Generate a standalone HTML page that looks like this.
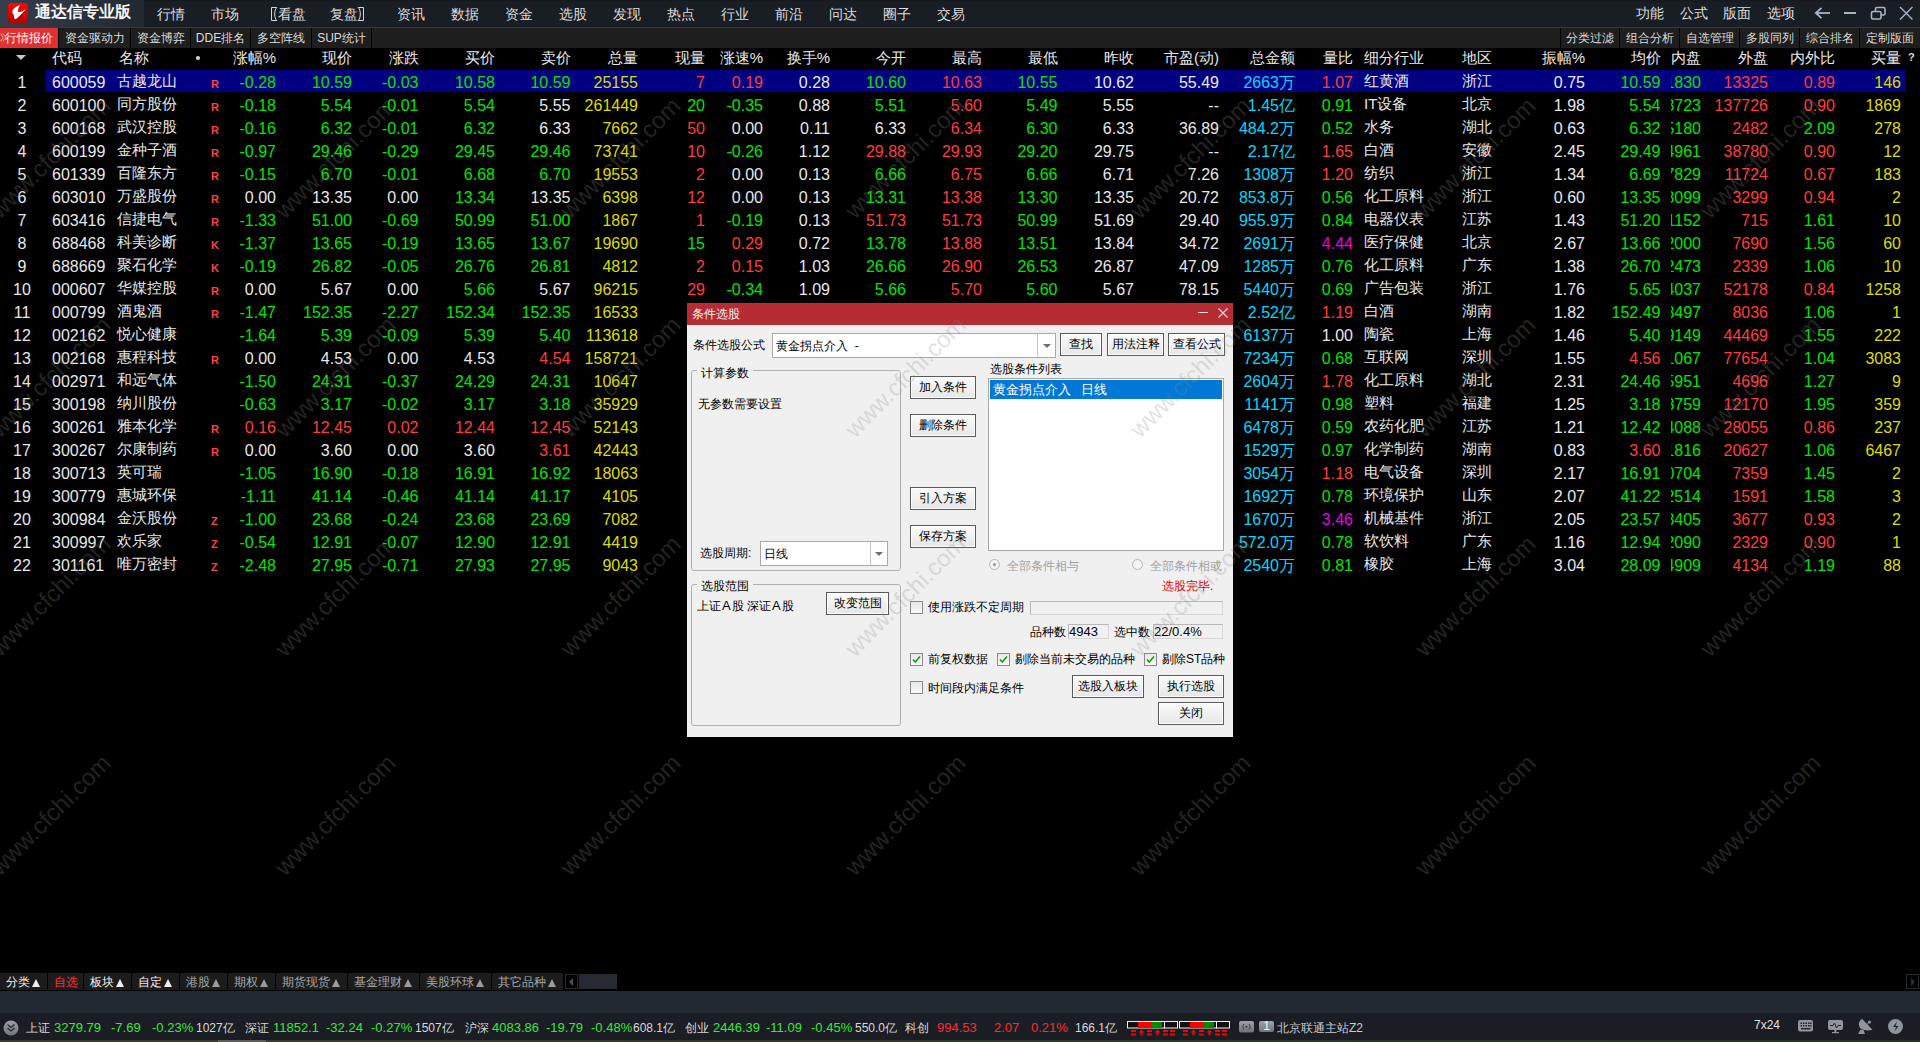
<!DOCTYPE html>
<html><head><meta charset="utf-8">
<style>
*{margin:0;padding:0;box-sizing:border-box}
html,body{width:1920px;height:1042px;overflow:hidden;background:#000}
body{position:relative;font-family:"Liberation Sans",sans-serif;color:#e8e8e8}
.t,.h,.n,.mk{position:absolute;white-space:nowrap;line-height:23px;height:23px}
.t{margin-top:1px}
.t{font-size:16px}
.n{font-size:15px;margin-top:-1px}
.h{font-size:15px;line-height:20px;height:20px}
.c{width:80px;text-align:center}
.mk{font-size:11px;font-weight:bold;color:#ff4040;line-height:29px}
.hl{position:absolute;left:45px;top:70px;width:1861px;height:22px;background:#000080}
.clip{position:absolute;left:1671px;width:30px;height:23px;overflow:hidden}
.tri{position:absolute;left:16px;top:55px;width:0;height:0;border-left:5px solid transparent;border-right:5px solid transparent;border-top:5px solid #c8c8c8}
.dot{position:absolute;left:196px;top:56px;width:4px;height:4px;border-radius:50%;background:#d8d8d8}
.q{position:absolute;left:1908px;top:51px;font-size:11px;font-weight:bold;color:#d8d8d8}
#title{position:absolute;left:0;top:0;width:1920px;height:27px;background:linear-gradient(#15181c,#191d24 2px)}
#title .lg{position:absolute;left:0;top:0;width:144px;height:27px;background:linear-gradient(to right,#363e4b,#222730)}
#title .m{position:absolute;top:1px;font-size:14px;line-height:27px;color:#dcdcdc;white-space:nowrap}
#tline{position:absolute;left:0;top:27px;width:1920px;height:1px;background:#353a42}
#tabs{position:absolute;left:0;top:28px;width:1920px;height:20px;background:#1e1e1e}
.tb{position:absolute;top:0;height:20px;font-size:12px;line-height:20px;color:#dcdcdc;text-align:center;border-right:1px solid #000;white-space:nowrap}

#dlg{position:absolute;left:687px;top:303px;width:546px;height:434px;background:#f0f0f0;color:#000}
#dlg .dt{position:absolute;left:0;top:0;width:546px;height:22px;background:#b52d33}
#dlg .dtt{position:absolute;left:5px;top:3px;font-size:12px;line-height:16px;color:#f6f6f6}
#dlg .dmin{position:absolute;left:511px;top:9px;width:10px;height:1px;background:#f4dcdc}
#dlg .dl{position:absolute;font-size:12px;line-height:16px;white-space:nowrap;color:#000}
#dlg .gr{color:#a0a0a0}
#dlg .glb{background:#f0f0f0;padding:0 4px}
#dlg .cb{position:absolute;background:#fff;border:1px solid #a8a8a8}
#dlg .cbd{position:absolute;top:0;width:1px;height:23px;background:#c8c8c8}
#dlg .cba{position:absolute;width:0;height:0;border-left:4px solid transparent;border-right:4px solid transparent;border-top:4px solid #707070}
#dlg .btn{position:absolute;height:23px;border:1px solid #5a5a5a;background:linear-gradient(#fbfbfb,#e6e6e6);box-shadow:inset 0 0 0 1px #fff;font-size:12px;line-height:21px;text-align:center;white-space:nowrap}
#dlg .lb{position:absolute;background:#fff;border:1px solid #a8a8a8}
#dlg .sel{position:absolute;left:1px;top:1px;width:232px;height:19px;background:#0078d7;color:#fff;font-size:13px;line-height:19px;padding-left:3px;white-space:nowrap}
#dlg .la{font-size:13px;margin:0 1px}
#dlg .grp{position:absolute;border:1px solid #b0b0b0;border-radius:3px}
#dlg .ck{position:absolute;width:13px;height:13px;border:1px solid #8a8a8a;background:linear-gradient(#e8e8e8,#f8f8f8)}
#dlg .ck svg{position:absolute;left:0;top:0}
#dlg .rd{position:absolute;width:11px;height:11px;border:1px solid #b8b8b8;border-radius:50%;background:#f4f4f4}
#dlg .rd.on:after{content:"";position:absolute;left:3px;top:3px;width:3px;height:3px;border-radius:50%;background:#909090}
#dlg .pb{position:absolute;border:1px solid #d8d8d8;border-top-color:#b8b8b8;border-left-color:#b8b8b8;background:#f0f0f0}

#btabs{position:absolute;left:0;top:973px;width:1920px;height:17px}
.bt{position:absolute;top:0;height:17px;background:#1c1c1c;font-size:12px;line-height:18px;color:#a8a8a8;padding-left:6px;white-space:nowrap}
.tu{display:inline-block;width:0;height:0;border-left:4.5px solid transparent;border-right:4.5px solid transparent;border-bottom:8px solid #9a9a9a;margin-left:2px;vertical-align:-1px}
.tu.w{border-bottom-color:#f0f0f0}
.sbtn{position:absolute;top:1px;width:13px;height:15px;border:1px solid #262a31;background:#000}
.tl{position:absolute;left:3px;top:3px;width:0;height:0;border-top:4px solid transparent;border-bottom:4px solid transparent;border-right:4px solid #4a4e56}
.tr{position:absolute;left:4px;top:3px;width:0;height:0;border-top:4px solid transparent;border-bottom:4px solid transparent;border-left:4px solid #2c3038}
.sthumb{position:absolute;left:579px;top:1px;width:38px;height:15px;background:#252a33}
#gap{position:absolute;left:0;top:991px;width:1920px;height:22px;background:#232930}
#status{position:absolute;left:0;top:1013px;width:1920px;height:27px;background:#1a1e24}
#olive{position:absolute;left:0;top:1040px;width:1920px;height:2px;background:linear-gradient(to right,#3a3c2a,#30382a 50%,#22341f)}
.s{position:absolute;top:7px;font-size:12px;line-height:16px;color:#d8d8d8;white-space:nowrap}
.s.g{color:#3ce63c;font-size:13px}
.s.rr{color:#ff2a2a;font-size:13px}
.ib{position:absolute;top:8px;width:15px;height:11px;border-radius:2px;background:linear-gradient(#9ca2ab,#70757e);text-align:center;line-height:11px;font-size:10px}

.wm{position:absolute;font-size:24px;line-height:23px;white-space:nowrap;color:rgba(140,140,140,0.27);transform:rotate(-45deg);transform-origin:0 100%;pointer-events:none}
</style></head><body>
<div id="title">
 <div class="lg"></div>
 <svg style="position:absolute;left:8px;top:3px" width="20" height="20" viewBox="0 0 20 20"><defs><linearGradient id="lgr" x1="0" y1="0" x2="0" y2="1"><stop offset="0" stop-color="#ff0606"/><stop offset="1" stop-color="#ae0000"/></linearGradient></defs><rect x="0" y="0" width="20" height="20" rx="3" fill="url(#lgr)"/><path d="M12 2 C8 3.5 4.6 6 4.2 8.5 C4 10 5.5 11.5 6 12.5 C6 14 6 16 7.5 16 C9.5 16 15 9 18 6.3 C15 8 12.5 9.5 10.5 9 C9.5 8.5 10 5 12 2 Z" fill="#fff"/></svg>
 <div class="m" style="left:35px;top:-2px;font-size:16px;font-weight:bold;color:#f4f4f4">通达信专业版</div>
 <div class="m" style="left:157px">行情</div>
 <div class="m" style="left:211px">市场</div>
 <svg style="position:absolute;left:270px;top:6px" width="8" height="16" viewBox="0 0 8 16"><path d="M6.8 1.5H1.5V14.5H6.8M6.8 1.5C4 4 4 12 6.8 14.5" fill="none" stroke="#d8d8d8" stroke-width="1"/></svg><div class="m" style="left:278px">看盘</div>
 <div class="m" style="left:330px">复盘</div><svg style="position:absolute;left:357px;top:6px" width="8" height="16" viewBox="0 0 8 16"><path d="M1.2 1.5H6.5V14.5H1.2M1.2 1.5C4 4 4 12 1.2 14.5" fill="none" stroke="#d8d8d8" stroke-width="1"/></svg>
 <div class="m" style="left:397px">资讯</div>
 <div class="m" style="left:451px">数据</div>
 <div class="m" style="left:505px">资金</div>
 <div class="m" style="left:559px">选股</div>
 <div class="m" style="left:613px">发现</div>
 <div class="m" style="left:667px">热点</div>
 <div class="m" style="left:721px">行业</div>
 <div class="m" style="left:775px">前沿</div>
 <div class="m" style="left:829px">问达</div>
 <div class="m" style="left:883px">圈子</div>
 <div class="m" style="left:937px">交易</div>
 <div class="m" style="left:1636px;top:0">功能</div>
 <div class="m" style="left:1680px;top:0">公式</div>
 <div class="m" style="left:1723px;top:0">版面</div>
 <div class="m" style="left:1767px;top:0">选项</div>
</div>
<div id="tline"></div>
<div id="tabs">
 <div class="tb" style="left:0;width:59px;background:#e03030;color:#fff">行情报价</div><svg style="position:absolute;left:0;top:5px" width="7" height="9" viewBox="0 0 7 9"><path d="M0.3 0.5L3.3 4.5L0.3 8.5M2.8 0.5L5.8 4.5L2.8 8.5" fill="none" stroke="#f0b4b4" stroke-width="0.9"/></svg>
 <div class="tb" style="left:59px;width:72px">资金驱动力</div>
 <div class="tb" style="left:131px;width:60px">资金博弈</div>
 <div class="tb" style="left:191px;width:60px">DDE排名</div>
 <div class="tb" style="left:251px;width:61px">多空阵线</div>
 <div class="tb" style="left:312px;width:60px">SUP统计</div>
 <div class="tb" style="left:1560px;width:60px;border-left:1px solid #000">分类过滤</div>
 <div class="tb" style="left:1620px;width:60px">组合分析</div>
 <div class="tb" style="left:1680px;width:60px">自选管理</div>
 <div class="tb" style="left:1740px;width:60px">多股同列</div>
 <div class="tb" style="left:1800px;width:60px">综合排名</div>
 <div class="tb" style="left:1860px;width:60px;border-right:0">定制版面</div>
</div>
<div class="tri"></div>
<div class="h" style="left:52px;top:48px;color:#e8e8e8">代码</div>
<div class="h" style="left:119px;top:48px;color:#e8e8e8">名称</div>
<div class="dot"></div>
<div class="h r" style="right:1644px;top:48px;color:#e8e8e8">涨幅%</div>
<div class="h r" style="right:1568px;top:48px;color:#e8e8e8">现价</div>
<div class="h r" style="right:1501.5px;top:48px;color:#e8e8e8">涨跌</div>
<div class="h r" style="right:1425px;top:48px;color:#e8e8e8">买价</div>
<div class="h r" style="right:1349.5px;top:48px;color:#e8e8e8">卖价</div>
<div class="h r" style="right:1282px;top:48px;color:#e8e8e8">总量</div>
<div class="h r" style="right:1215px;top:48px;color:#e8e8e8">现量</div>
<div class="h r" style="right:1157px;top:48px;color:#e8e8e8">涨速%</div>
<div class="h r" style="right:1090px;top:48px;color:#e8e8e8">换手%</div>
<div class="h r" style="right:1014px;top:48px;color:#e8e8e8">今开</div>
<div class="h r" style="right:938px;top:48px;color:#e8e8e8">最高</div>
<div class="h r" style="right:862.5px;top:48px;color:#e8e8e8">最低</div>
<div class="h r" style="right:786px;top:48px;color:#e8e8e8">昨收</div>
<div class="h r" style="right:701px;top:48px;color:#e8e8e8">市盈(动)</div>
<div class="h r" style="right:625px;top:48px;color:#e8e8e8">总金额</div>
<div class="h r" style="right:567px;top:48px;color:#e8e8e8">量比</div>
<div class="h" style="left:1364px;top:48px;color:#e8e8e8">细分行业</div>
<div class="h" style="left:1462px;top:48px;color:#e8e8e8">地区</div>
<div class="h r" style="right:335px;top:48px;color:#e8e8e8">振幅%</div>
<div class="h r" style="right:259.5px;top:48px;color:#e8e8e8">均价</div>
<div class="h r" style="right:219px;top:48px;color:#e8e8e8">内盘</div>
<div class="h r" style="right:152px;top:48px;color:#e8e8e8">外盘</div>
<div class="h r" style="right:85px;top:48px;color:#e8e8e8">内外比</div>
<div class="h r" style="right:19px;top:48px;color:#e8e8e8">买量</div>
<div class="q">?</div>
<div class="hl"></div>
<div class="t c" style="left:-18px;top:70px;color:#e8e8e8">1</div>
<div class="t" style="left:52px;top:70px;color:#e8e8e8">600059</div>
<div class="n" style="left:117px;top:70px;color:#e8e8e8">古越龙山</div>
<div class="mk" style="left:211px;top:70px">R</div>
<div class="t r" style="right:1644px;top:70px;color:#00e600">-0.28</div>
<div class="t r" style="right:1568px;top:70px;color:#00e600">10.59</div>
<div class="t r" style="right:1501.5px;top:70px;color:#00e600">-0.03</div>
<div class="t r" style="right:1425px;top:70px;color:#00e600">10.58</div>
<div class="t r" style="right:1349.5px;top:70px;color:#00e600">10.59</div>
<div class="t r" style="right:1282px;top:70px;color:#dcdc00">25155</div>
<div class="t r" style="right:1215px;top:70px;color:#ff3c3c">7</div>
<div class="t r" style="right:1157px;top:70px;color:#ff3c3c">0.19</div>
<div class="t r" style="right:1090px;top:70px;color:#e8e8e8">0.28</div>
<div class="t r" style="right:1014px;top:70px;color:#00e600">10.60</div>
<div class="t r" style="right:938px;top:70px;color:#ff3c3c">10.63</div>
<div class="t r" style="right:862.5px;top:70px;color:#00e600">10.55</div>
<div class="t r" style="right:786px;top:70px;color:#e8e8e8">10.62</div>
<div class="t r" style="right:701px;top:70px;color:#e8e8e8">55.49</div>
<div class="t r" style="right:625px;top:70px;color:#00d8ff">2663万</div>
<div class="t r" style="right:567px;top:70px;color:#ff3c3c">1.07</div>
<div class="n" style="left:1364px;top:70px;color:#e8e8e8">红黄酒</div>
<div class="n" style="left:1462px;top:70px;color:#e8e8e8">浙江</div>
<div class="t r" style="right:335px;top:70px;color:#e8e8e8">0.75</div>
<div class="t r" style="right:259.5px;top:70px;color:#00e600">10.59</div>
<div class="clip" style="top:70px"><div class="t r" style="right:0px;top:0;color:#00e600">11830</div></div>
<div class="t r" style="right:152px;top:70px;color:#ff3c3c">13325</div>
<div class="t r" style="right:85px;top:70px;color:#ff3c3c">0.89</div>
<div class="t r" style="right:19px;top:70px;color:#dcdc00">146</div>
<div class="t c" style="left:-18px;top:93px;color:#e8e8e8">2</div>
<div class="t" style="left:52px;top:93px;color:#e8e8e8">600100</div>
<div class="n" style="left:117px;top:93px;color:#e8e8e8">同方股份</div>
<div class="mk" style="left:211px;top:93px">R</div>
<div class="t r" style="right:1644px;top:93px;color:#00e600">-0.18</div>
<div class="t r" style="right:1568px;top:93px;color:#00e600">5.54</div>
<div class="t r" style="right:1501.5px;top:93px;color:#00e600">-0.01</div>
<div class="t r" style="right:1425px;top:93px;color:#00e600">5.54</div>
<div class="t r" style="right:1349.5px;top:93px;color:#e8e8e8">5.55</div>
<div class="t r" style="right:1282px;top:93px;color:#dcdc00">261449</div>
<div class="t r" style="right:1215px;top:93px;color:#00e600">20</div>
<div class="t r" style="right:1157px;top:93px;color:#00e600">-0.35</div>
<div class="t r" style="right:1090px;top:93px;color:#e8e8e8">0.88</div>
<div class="t r" style="right:1014px;top:93px;color:#00e600">5.51</div>
<div class="t r" style="right:938px;top:93px;color:#ff3c3c">5.60</div>
<div class="t r" style="right:862.5px;top:93px;color:#00e600">5.49</div>
<div class="t r" style="right:786px;top:93px;color:#e8e8e8">5.55</div>
<div class="t r" style="right:701px;top:93px;color:#e8e8e8">--</div>
<div class="t r" style="right:625px;top:93px;color:#00d8ff">1.45亿</div>
<div class="t r" style="right:567px;top:93px;color:#00e600">0.91</div>
<div class="n" style="left:1364px;top:93px;color:#e8e8e8">IT设备</div>
<div class="n" style="left:1462px;top:93px;color:#e8e8e8">北京</div>
<div class="t r" style="right:335px;top:93px;color:#e8e8e8">1.98</div>
<div class="t r" style="right:259.5px;top:93px;color:#00e600">5.54</div>
<div class="clip" style="top:93px"><div class="t r" style="right:0px;top:0;color:#00e600">123723</div></div>
<div class="t r" style="right:152px;top:93px;color:#ff3c3c">137726</div>
<div class="t r" style="right:85px;top:93px;color:#ff3c3c">0.90</div>
<div class="t r" style="right:19px;top:93px;color:#dcdc00">1869</div>
<div class="t c" style="left:-18px;top:116px;color:#e8e8e8">3</div>
<div class="t" style="left:52px;top:116px;color:#e8e8e8">600168</div>
<div class="n" style="left:117px;top:116px;color:#e8e8e8">武汉控股</div>
<div class="mk" style="left:211px;top:116px">R</div>
<div class="t r" style="right:1644px;top:116px;color:#00e600">-0.16</div>
<div class="t r" style="right:1568px;top:116px;color:#00e600">6.32</div>
<div class="t r" style="right:1501.5px;top:116px;color:#00e600">-0.01</div>
<div class="t r" style="right:1425px;top:116px;color:#00e600">6.32</div>
<div class="t r" style="right:1349.5px;top:116px;color:#e8e8e8">6.33</div>
<div class="t r" style="right:1282px;top:116px;color:#dcdc00">7662</div>
<div class="t r" style="right:1215px;top:116px;color:#ff3c3c">50</div>
<div class="t r" style="right:1157px;top:116px;color:#e8e8e8">0.00</div>
<div class="t r" style="right:1090px;top:116px;color:#e8e8e8">0.11</div>
<div class="t r" style="right:1014px;top:116px;color:#e8e8e8">6.33</div>
<div class="t r" style="right:938px;top:116px;color:#ff3c3c">6.34</div>
<div class="t r" style="right:862.5px;top:116px;color:#00e600">6.30</div>
<div class="t r" style="right:786px;top:116px;color:#e8e8e8">6.33</div>
<div class="t r" style="right:701px;top:116px;color:#e8e8e8">36.89</div>
<div class="t r" style="right:625px;top:116px;color:#00d8ff">484.2万</div>
<div class="t r" style="right:567px;top:116px;color:#00e600">0.52</div>
<div class="n" style="left:1364px;top:116px;color:#e8e8e8">水务</div>
<div class="n" style="left:1462px;top:116px;color:#e8e8e8">湖北</div>
<div class="t r" style="right:335px;top:116px;color:#e8e8e8">0.63</div>
<div class="t r" style="right:259.5px;top:116px;color:#00e600">6.32</div>
<div class="clip" style="top:116px"><div class="t r" style="right:0px;top:0;color:#00e600">5180</div></div>
<div class="t r" style="right:152px;top:116px;color:#ff3c3c">2482</div>
<div class="t r" style="right:85px;top:116px;color:#00e600">2.09</div>
<div class="t r" style="right:19px;top:116px;color:#dcdc00">278</div>
<div class="t c" style="left:-18px;top:139px;color:#e8e8e8">4</div>
<div class="t" style="left:52px;top:139px;color:#e8e8e8">600199</div>
<div class="n" style="left:117px;top:139px;color:#e8e8e8">金种子酒</div>
<div class="mk" style="left:211px;top:139px">R</div>
<div class="t r" style="right:1644px;top:139px;color:#00e600">-0.97</div>
<div class="t r" style="right:1568px;top:139px;color:#00e600">29.46</div>
<div class="t r" style="right:1501.5px;top:139px;color:#00e600">-0.29</div>
<div class="t r" style="right:1425px;top:139px;color:#00e600">29.45</div>
<div class="t r" style="right:1349.5px;top:139px;color:#00e600">29.46</div>
<div class="t r" style="right:1282px;top:139px;color:#dcdc00">73741</div>
<div class="t r" style="right:1215px;top:139px;color:#ff3c3c">10</div>
<div class="t r" style="right:1157px;top:139px;color:#00e600">-0.26</div>
<div class="t r" style="right:1090px;top:139px;color:#e8e8e8">1.12</div>
<div class="t r" style="right:1014px;top:139px;color:#ff3c3c">29.88</div>
<div class="t r" style="right:938px;top:139px;color:#ff3c3c">29.93</div>
<div class="t r" style="right:862.5px;top:139px;color:#00e600">29.20</div>
<div class="t r" style="right:786px;top:139px;color:#e8e8e8">29.75</div>
<div class="t r" style="right:701px;top:139px;color:#e8e8e8">--</div>
<div class="t r" style="right:625px;top:139px;color:#00d8ff">2.17亿</div>
<div class="t r" style="right:567px;top:139px;color:#ff3c3c">1.65</div>
<div class="n" style="left:1364px;top:139px;color:#e8e8e8">白酒</div>
<div class="n" style="left:1462px;top:139px;color:#e8e8e8">安徽</div>
<div class="t r" style="right:335px;top:139px;color:#e8e8e8">2.45</div>
<div class="t r" style="right:259.5px;top:139px;color:#00e600">29.49</div>
<div class="clip" style="top:139px"><div class="t r" style="right:0px;top:0;color:#00e600">34961</div></div>
<div class="t r" style="right:152px;top:139px;color:#ff3c3c">38780</div>
<div class="t r" style="right:85px;top:139px;color:#ff3c3c">0.90</div>
<div class="t r" style="right:19px;top:139px;color:#dcdc00">12</div>
<div class="t c" style="left:-18px;top:162px;color:#e8e8e8">5</div>
<div class="t" style="left:52px;top:162px;color:#e8e8e8">601339</div>
<div class="n" style="left:117px;top:162px;color:#e8e8e8">百隆东方</div>
<div class="mk" style="left:211px;top:162px">R</div>
<div class="t r" style="right:1644px;top:162px;color:#00e600">-0.15</div>
<div class="t r" style="right:1568px;top:162px;color:#00e600">6.70</div>
<div class="t r" style="right:1501.5px;top:162px;color:#00e600">-0.01</div>
<div class="t r" style="right:1425px;top:162px;color:#00e600">6.68</div>
<div class="t r" style="right:1349.5px;top:162px;color:#00e600">6.70</div>
<div class="t r" style="right:1282px;top:162px;color:#dcdc00">19553</div>
<div class="t r" style="right:1215px;top:162px;color:#ff3c3c">2</div>
<div class="t r" style="right:1157px;top:162px;color:#e8e8e8">0.00</div>
<div class="t r" style="right:1090px;top:162px;color:#e8e8e8">0.13</div>
<div class="t r" style="right:1014px;top:162px;color:#00e600">6.66</div>
<div class="t r" style="right:938px;top:162px;color:#ff3c3c">6.75</div>
<div class="t r" style="right:862.5px;top:162px;color:#00e600">6.66</div>
<div class="t r" style="right:786px;top:162px;color:#e8e8e8">6.71</div>
<div class="t r" style="right:701px;top:162px;color:#e8e8e8">7.26</div>
<div class="t r" style="right:625px;top:162px;color:#00d8ff">1308万</div>
<div class="t r" style="right:567px;top:162px;color:#ff3c3c">1.20</div>
<div class="n" style="left:1364px;top:162px;color:#e8e8e8">纺织</div>
<div class="n" style="left:1462px;top:162px;color:#e8e8e8">浙江</div>
<div class="t r" style="right:335px;top:162px;color:#e8e8e8">1.34</div>
<div class="t r" style="right:259.5px;top:162px;color:#00e600">6.69</div>
<div class="clip" style="top:162px"><div class="t r" style="right:0px;top:0;color:#00e600">7829</div></div>
<div class="t r" style="right:152px;top:162px;color:#ff3c3c">11724</div>
<div class="t r" style="right:85px;top:162px;color:#ff3c3c">0.67</div>
<div class="t r" style="right:19px;top:162px;color:#dcdc00">183</div>
<div class="t c" style="left:-18px;top:185px;color:#e8e8e8">6</div>
<div class="t" style="left:52px;top:185px;color:#e8e8e8">603010</div>
<div class="n" style="left:117px;top:185px;color:#e8e8e8">万盛股份</div>
<div class="mk" style="left:211px;top:185px">R</div>
<div class="t r" style="right:1644px;top:185px;color:#e8e8e8">0.00</div>
<div class="t r" style="right:1568px;top:185px;color:#e8e8e8">13.35</div>
<div class="t r" style="right:1501.5px;top:185px;color:#e8e8e8">0.00</div>
<div class="t r" style="right:1425px;top:185px;color:#00e600">13.34</div>
<div class="t r" style="right:1349.5px;top:185px;color:#e8e8e8">13.35</div>
<div class="t r" style="right:1282px;top:185px;color:#dcdc00">6398</div>
<div class="t r" style="right:1215px;top:185px;color:#ff3c3c">12</div>
<div class="t r" style="right:1157px;top:185px;color:#e8e8e8">0.00</div>
<div class="t r" style="right:1090px;top:185px;color:#e8e8e8">0.13</div>
<div class="t r" style="right:1014px;top:185px;color:#00e600">13.31</div>
<div class="t r" style="right:938px;top:185px;color:#ff3c3c">13.38</div>
<div class="t r" style="right:862.5px;top:185px;color:#00e600">13.30</div>
<div class="t r" style="right:786px;top:185px;color:#e8e8e8">13.35</div>
<div class="t r" style="right:701px;top:185px;color:#e8e8e8">20.72</div>
<div class="t r" style="right:625px;top:185px;color:#00d8ff">853.8万</div>
<div class="t r" style="right:567px;top:185px;color:#00e600">0.56</div>
<div class="n" style="left:1364px;top:185px;color:#e8e8e8">化工原料</div>
<div class="n" style="left:1462px;top:185px;color:#e8e8e8">浙江</div>
<div class="t r" style="right:335px;top:185px;color:#e8e8e8">0.60</div>
<div class="t r" style="right:259.5px;top:185px;color:#00e600">13.35</div>
<div class="clip" style="top:185px"><div class="t r" style="right:0px;top:0;color:#00e600">3099</div></div>
<div class="t r" style="right:152px;top:185px;color:#ff3c3c">3299</div>
<div class="t r" style="right:85px;top:185px;color:#ff3c3c">0.94</div>
<div class="t r" style="right:19px;top:185px;color:#dcdc00">2</div>
<div class="t c" style="left:-18px;top:208px;color:#e8e8e8">7</div>
<div class="t" style="left:52px;top:208px;color:#e8e8e8">603416</div>
<div class="n" style="left:117px;top:208px;color:#e8e8e8">信捷电气</div>
<div class="mk" style="left:211px;top:208px">R</div>
<div class="t r" style="right:1644px;top:208px;color:#00e600">-1.33</div>
<div class="t r" style="right:1568px;top:208px;color:#00e600">51.00</div>
<div class="t r" style="right:1501.5px;top:208px;color:#00e600">-0.69</div>
<div class="t r" style="right:1425px;top:208px;color:#00e600">50.99</div>
<div class="t r" style="right:1349.5px;top:208px;color:#00e600">51.00</div>
<div class="t r" style="right:1282px;top:208px;color:#dcdc00">1867</div>
<div class="t r" style="right:1215px;top:208px;color:#ff3c3c">1</div>
<div class="t r" style="right:1157px;top:208px;color:#00e600">-0.19</div>
<div class="t r" style="right:1090px;top:208px;color:#e8e8e8">0.13</div>
<div class="t r" style="right:1014px;top:208px;color:#ff3c3c">51.73</div>
<div class="t r" style="right:938px;top:208px;color:#ff3c3c">51.73</div>
<div class="t r" style="right:862.5px;top:208px;color:#00e600">50.99</div>
<div class="t r" style="right:786px;top:208px;color:#e8e8e8">51.69</div>
<div class="t r" style="right:701px;top:208px;color:#e8e8e8">29.40</div>
<div class="t r" style="right:625px;top:208px;color:#00d8ff">955.9万</div>
<div class="t r" style="right:567px;top:208px;color:#00e600">0.84</div>
<div class="n" style="left:1364px;top:208px;color:#e8e8e8">电器仪表</div>
<div class="n" style="left:1462px;top:208px;color:#e8e8e8">江苏</div>
<div class="t r" style="right:335px;top:208px;color:#e8e8e8">1.43</div>
<div class="t r" style="right:259.5px;top:208px;color:#00e600">51.20</div>
<div class="clip" style="top:208px"><div class="t r" style="right:0px;top:0;color:#00e600">1152</div></div>
<div class="t r" style="right:152px;top:208px;color:#ff3c3c">715</div>
<div class="t r" style="right:85px;top:208px;color:#00e600">1.61</div>
<div class="t r" style="right:19px;top:208px;color:#dcdc00">10</div>
<div class="t c" style="left:-18px;top:231px;color:#e8e8e8">8</div>
<div class="t" style="left:52px;top:231px;color:#e8e8e8">688468</div>
<div class="n" style="left:117px;top:231px;color:#e8e8e8">科美诊断</div>
<div class="mk" style="left:211px;top:231px">K</div>
<div class="t r" style="right:1644px;top:231px;color:#00e600">-1.37</div>
<div class="t r" style="right:1568px;top:231px;color:#00e600">13.65</div>
<div class="t r" style="right:1501.5px;top:231px;color:#00e600">-0.19</div>
<div class="t r" style="right:1425px;top:231px;color:#00e600">13.65</div>
<div class="t r" style="right:1349.5px;top:231px;color:#00e600">13.67</div>
<div class="t r" style="right:1282px;top:231px;color:#dcdc00">19690</div>
<div class="t r" style="right:1215px;top:231px;color:#00e600">15</div>
<div class="t r" style="right:1157px;top:231px;color:#ff3c3c">0.29</div>
<div class="t r" style="right:1090px;top:231px;color:#e8e8e8">0.72</div>
<div class="t r" style="right:1014px;top:231px;color:#00e600">13.78</div>
<div class="t r" style="right:938px;top:231px;color:#ff3c3c">13.88</div>
<div class="t r" style="right:862.5px;top:231px;color:#00e600">13.51</div>
<div class="t r" style="right:786px;top:231px;color:#e8e8e8">13.84</div>
<div class="t r" style="right:701px;top:231px;color:#e8e8e8">34.72</div>
<div class="t r" style="right:625px;top:231px;color:#00d8ff">2691万</div>
<div class="t r" style="right:567px;top:231px;color:#e600e6">4.44</div>
<div class="n" style="left:1364px;top:231px;color:#e8e8e8">医疗保健</div>
<div class="n" style="left:1462px;top:231px;color:#e8e8e8">北京</div>
<div class="t r" style="right:335px;top:231px;color:#e8e8e8">2.67</div>
<div class="t r" style="right:259.5px;top:231px;color:#00e600">13.66</div>
<div class="clip" style="top:231px"><div class="t r" style="right:0px;top:0;color:#00e600">12000</div></div>
<div class="t r" style="right:152px;top:231px;color:#ff3c3c">7690</div>
<div class="t r" style="right:85px;top:231px;color:#00e600">1.56</div>
<div class="t r" style="right:19px;top:231px;color:#dcdc00">60</div>
<div class="t c" style="left:-18px;top:254px;color:#e8e8e8">9</div>
<div class="t" style="left:52px;top:254px;color:#e8e8e8">688669</div>
<div class="n" style="left:117px;top:254px;color:#e8e8e8">聚石化学</div>
<div class="mk" style="left:211px;top:254px">K</div>
<div class="t r" style="right:1644px;top:254px;color:#00e600">-0.19</div>
<div class="t r" style="right:1568px;top:254px;color:#00e600">26.82</div>
<div class="t r" style="right:1501.5px;top:254px;color:#00e600">-0.05</div>
<div class="t r" style="right:1425px;top:254px;color:#00e600">26.76</div>
<div class="t r" style="right:1349.5px;top:254px;color:#00e600">26.81</div>
<div class="t r" style="right:1282px;top:254px;color:#dcdc00">4812</div>
<div class="t r" style="right:1215px;top:254px;color:#ff3c3c">2</div>
<div class="t r" style="right:1157px;top:254px;color:#ff3c3c">0.15</div>
<div class="t r" style="right:1090px;top:254px;color:#e8e8e8">1.03</div>
<div class="t r" style="right:1014px;top:254px;color:#00e600">26.66</div>
<div class="t r" style="right:938px;top:254px;color:#ff3c3c">26.90</div>
<div class="t r" style="right:862.5px;top:254px;color:#00e600">26.53</div>
<div class="t r" style="right:786px;top:254px;color:#e8e8e8">26.87</div>
<div class="t r" style="right:701px;top:254px;color:#e8e8e8">47.09</div>
<div class="t r" style="right:625px;top:254px;color:#00d8ff">1285万</div>
<div class="t r" style="right:567px;top:254px;color:#00e600">0.76</div>
<div class="n" style="left:1364px;top:254px;color:#e8e8e8">化工原料</div>
<div class="n" style="left:1462px;top:254px;color:#e8e8e8">广东</div>
<div class="t r" style="right:335px;top:254px;color:#e8e8e8">1.38</div>
<div class="t r" style="right:259.5px;top:254px;color:#00e600">26.70</div>
<div class="clip" style="top:254px"><div class="t r" style="right:0px;top:0;color:#00e600">2473</div></div>
<div class="t r" style="right:152px;top:254px;color:#ff3c3c">2339</div>
<div class="t r" style="right:85px;top:254px;color:#00e600">1.06</div>
<div class="t r" style="right:19px;top:254px;color:#dcdc00">10</div>
<div class="t c" style="left:-18px;top:277px;color:#e8e8e8">10</div>
<div class="t" style="left:52px;top:277px;color:#e8e8e8">000607</div>
<div class="n" style="left:117px;top:277px;color:#e8e8e8">华媒控股</div>
<div class="mk" style="left:211px;top:277px">R</div>
<div class="t r" style="right:1644px;top:277px;color:#e8e8e8">0.00</div>
<div class="t r" style="right:1568px;top:277px;color:#e8e8e8">5.67</div>
<div class="t r" style="right:1501.5px;top:277px;color:#e8e8e8">0.00</div>
<div class="t r" style="right:1425px;top:277px;color:#00e600">5.66</div>
<div class="t r" style="right:1349.5px;top:277px;color:#e8e8e8">5.67</div>
<div class="t r" style="right:1282px;top:277px;color:#dcdc00">96215</div>
<div class="t r" style="right:1215px;top:277px;color:#ff3c3c">29</div>
<div class="t r" style="right:1157px;top:277px;color:#00e600">-0.34</div>
<div class="t r" style="right:1090px;top:277px;color:#e8e8e8">1.09</div>
<div class="t r" style="right:1014px;top:277px;color:#00e600">5.66</div>
<div class="t r" style="right:938px;top:277px;color:#ff3c3c">5.70</div>
<div class="t r" style="right:862.5px;top:277px;color:#00e600">5.60</div>
<div class="t r" style="right:786px;top:277px;color:#e8e8e8">5.67</div>
<div class="t r" style="right:701px;top:277px;color:#e8e8e8">78.15</div>
<div class="t r" style="right:625px;top:277px;color:#00d8ff">5440万</div>
<div class="t r" style="right:567px;top:277px;color:#00e600">0.69</div>
<div class="n" style="left:1364px;top:277px;color:#e8e8e8">广告包装</div>
<div class="n" style="left:1462px;top:277px;color:#e8e8e8">浙江</div>
<div class="t r" style="right:335px;top:277px;color:#e8e8e8">1.76</div>
<div class="t r" style="right:259.5px;top:277px;color:#00e600">5.65</div>
<div class="clip" style="top:277px"><div class="t r" style="right:0px;top:0;color:#00e600">44037</div></div>
<div class="t r" style="right:152px;top:277px;color:#ff3c3c">52178</div>
<div class="t r" style="right:85px;top:277px;color:#ff3c3c">0.84</div>
<div class="t r" style="right:19px;top:277px;color:#dcdc00">1258</div>
<div class="t c" style="left:-18px;top:300px;color:#e8e8e8">11</div>
<div class="t" style="left:52px;top:300px;color:#e8e8e8">000799</div>
<div class="n" style="left:117px;top:300px;color:#e8e8e8">酒鬼酒</div>
<div class="mk" style="left:211px;top:300px">R</div>
<div class="t r" style="right:1644px;top:300px;color:#00e600">-1.47</div>
<div class="t r" style="right:1568px;top:300px;color:#00e600">152.35</div>
<div class="t r" style="right:1501.5px;top:300px;color:#00e600">-2.27</div>
<div class="t r" style="right:1425px;top:300px;color:#00e600">152.34</div>
<div class="t r" style="right:1349.5px;top:300px;color:#00e600">152.35</div>
<div class="t r" style="right:1282px;top:300px;color:#dcdc00">16533</div>
<div class="t r" style="right:625px;top:300px;color:#00d8ff">2.52亿</div>
<div class="t r" style="right:567px;top:300px;color:#ff3c3c">1.19</div>
<div class="n" style="left:1364px;top:300px;color:#e8e8e8">白酒</div>
<div class="n" style="left:1462px;top:300px;color:#e8e8e8">湖南</div>
<div class="t r" style="right:335px;top:300px;color:#e8e8e8">1.82</div>
<div class="t r" style="right:259.5px;top:300px;color:#00e600">152.49</div>
<div class="clip" style="top:300px"><div class="t r" style="right:0px;top:0;color:#00e600">8497</div></div>
<div class="t r" style="right:152px;top:300px;color:#ff3c3c">8036</div>
<div class="t r" style="right:85px;top:300px;color:#00e600">1.06</div>
<div class="t r" style="right:19px;top:300px;color:#dcdc00">1</div>
<div class="t c" style="left:-18px;top:323px;color:#e8e8e8">12</div>
<div class="t" style="left:52px;top:323px;color:#e8e8e8">002162</div>
<div class="n" style="left:117px;top:323px;color:#e8e8e8">悦心健康</div>
<div class="t r" style="right:1644px;top:323px;color:#00e600">-1.64</div>
<div class="t r" style="right:1568px;top:323px;color:#00e600">5.39</div>
<div class="t r" style="right:1501.5px;top:323px;color:#00e600">-0.09</div>
<div class="t r" style="right:1425px;top:323px;color:#00e600">5.39</div>
<div class="t r" style="right:1349.5px;top:323px;color:#00e600">5.40</div>
<div class="t r" style="right:1282px;top:323px;color:#dcdc00">113618</div>
<div class="t r" style="right:625px;top:323px;color:#00d8ff">6137万</div>
<div class="t r" style="right:567px;top:323px;color:#e8e8e8">1.00</div>
<div class="n" style="left:1364px;top:323px;color:#e8e8e8">陶瓷</div>
<div class="n" style="left:1462px;top:323px;color:#e8e8e8">上海</div>
<div class="t r" style="right:335px;top:323px;color:#e8e8e8">1.46</div>
<div class="t r" style="right:259.5px;top:323px;color:#00e600">5.40</div>
<div class="clip" style="top:323px"><div class="t r" style="right:0px;top:0;color:#00e600">69149</div></div>
<div class="t r" style="right:152px;top:323px;color:#ff3c3c">44469</div>
<div class="t r" style="right:85px;top:323px;color:#00e600">1.55</div>
<div class="t r" style="right:19px;top:323px;color:#dcdc00">222</div>
<div class="t c" style="left:-18px;top:346px;color:#e8e8e8">13</div>
<div class="t" style="left:52px;top:346px;color:#e8e8e8">002168</div>
<div class="n" style="left:117px;top:346px;color:#e8e8e8">惠程科技</div>
<div class="mk" style="left:211px;top:346px">R</div>
<div class="t r" style="right:1644px;top:346px;color:#e8e8e8">0.00</div>
<div class="t r" style="right:1568px;top:346px;color:#e8e8e8">4.53</div>
<div class="t r" style="right:1501.5px;top:346px;color:#e8e8e8">0.00</div>
<div class="t r" style="right:1425px;top:346px;color:#e8e8e8">4.53</div>
<div class="t r" style="right:1349.5px;top:346px;color:#ff3c3c">4.54</div>
<div class="t r" style="right:1282px;top:346px;color:#dcdc00">158721</div>
<div class="t r" style="right:625px;top:346px;color:#00d8ff">7234万</div>
<div class="t r" style="right:567px;top:346px;color:#00e600">0.68</div>
<div class="n" style="left:1364px;top:346px;color:#e8e8e8">互联网</div>
<div class="n" style="left:1462px;top:346px;color:#e8e8e8">深圳</div>
<div class="t r" style="right:335px;top:346px;color:#e8e8e8">1.55</div>
<div class="t r" style="right:259.5px;top:346px;color:#ff3c3c">4.56</div>
<div class="clip" style="top:346px"><div class="t r" style="right:0px;top:0;color:#00e600">81067</div></div>
<div class="t r" style="right:152px;top:346px;color:#ff3c3c">77654</div>
<div class="t r" style="right:85px;top:346px;color:#00e600">1.04</div>
<div class="t r" style="right:19px;top:346px;color:#dcdc00">3083</div>
<div class="t c" style="left:-18px;top:369px;color:#e8e8e8">14</div>
<div class="t" style="left:52px;top:369px;color:#e8e8e8">002971</div>
<div class="n" style="left:117px;top:369px;color:#e8e8e8">和远气体</div>
<div class="t r" style="right:1644px;top:369px;color:#00e600">-1.50</div>
<div class="t r" style="right:1568px;top:369px;color:#00e600">24.31</div>
<div class="t r" style="right:1501.5px;top:369px;color:#00e600">-0.37</div>
<div class="t r" style="right:1425px;top:369px;color:#00e600">24.29</div>
<div class="t r" style="right:1349.5px;top:369px;color:#00e600">24.31</div>
<div class="t r" style="right:1282px;top:369px;color:#dcdc00">10647</div>
<div class="t r" style="right:625px;top:369px;color:#00d8ff">2604万</div>
<div class="t r" style="right:567px;top:369px;color:#ff3c3c">1.78</div>
<div class="n" style="left:1364px;top:369px;color:#e8e8e8">化工原料</div>
<div class="n" style="left:1462px;top:369px;color:#e8e8e8">湖北</div>
<div class="t r" style="right:335px;top:369px;color:#e8e8e8">2.31</div>
<div class="t r" style="right:259.5px;top:369px;color:#00e600">24.46</div>
<div class="clip" style="top:369px"><div class="t r" style="right:0px;top:0;color:#00e600">5951</div></div>
<div class="t r" style="right:152px;top:369px;color:#ff3c3c">4696</div>
<div class="t r" style="right:85px;top:369px;color:#00e600">1.27</div>
<div class="t r" style="right:19px;top:369px;color:#dcdc00">9</div>
<div class="t c" style="left:-18px;top:392px;color:#e8e8e8">15</div>
<div class="t" style="left:52px;top:392px;color:#e8e8e8">300198</div>
<div class="n" style="left:117px;top:392px;color:#e8e8e8">纳川股份</div>
<div class="t r" style="right:1644px;top:392px;color:#00e600">-0.63</div>
<div class="t r" style="right:1568px;top:392px;color:#00e600">3.17</div>
<div class="t r" style="right:1501.5px;top:392px;color:#00e600">-0.02</div>
<div class="t r" style="right:1425px;top:392px;color:#00e600">3.17</div>
<div class="t r" style="right:1349.5px;top:392px;color:#00e600">3.18</div>
<div class="t r" style="right:1282px;top:392px;color:#dcdc00">35929</div>
<div class="t r" style="right:625px;top:392px;color:#00d8ff">1141万</div>
<div class="t r" style="right:567px;top:392px;color:#00e600">0.98</div>
<div class="n" style="left:1364px;top:392px;color:#e8e8e8">塑料</div>
<div class="n" style="left:1462px;top:392px;color:#e8e8e8">福建</div>
<div class="t r" style="right:335px;top:392px;color:#e8e8e8">1.25</div>
<div class="t r" style="right:259.5px;top:392px;color:#00e600">3.18</div>
<div class="clip" style="top:392px"><div class="t r" style="right:0px;top:0;color:#00e600">23759</div></div>
<div class="t r" style="right:152px;top:392px;color:#ff3c3c">12170</div>
<div class="t r" style="right:85px;top:392px;color:#00e600">1.95</div>
<div class="t r" style="right:19px;top:392px;color:#dcdc00">359</div>
<div class="t c" style="left:-18px;top:415px;color:#e8e8e8">16</div>
<div class="t" style="left:52px;top:415px;color:#e8e8e8">300261</div>
<div class="n" style="left:117px;top:415px;color:#e8e8e8">雅本化学</div>
<div class="mk" style="left:211px;top:415px">R</div>
<div class="t r" style="right:1644px;top:415px;color:#ff3c3c">0.16</div>
<div class="t r" style="right:1568px;top:415px;color:#ff3c3c">12.45</div>
<div class="t r" style="right:1501.5px;top:415px;color:#ff3c3c">0.02</div>
<div class="t r" style="right:1425px;top:415px;color:#ff3c3c">12.44</div>
<div class="t r" style="right:1349.5px;top:415px;color:#ff3c3c">12.45</div>
<div class="t r" style="right:1282px;top:415px;color:#dcdc00">52143</div>
<div class="t r" style="right:625px;top:415px;color:#00d8ff">6478万</div>
<div class="t r" style="right:567px;top:415px;color:#00e600">0.59</div>
<div class="n" style="left:1364px;top:415px;color:#e8e8e8">农药化肥</div>
<div class="n" style="left:1462px;top:415px;color:#e8e8e8">江苏</div>
<div class="t r" style="right:335px;top:415px;color:#e8e8e8">1.21</div>
<div class="t r" style="right:259.5px;top:415px;color:#00e600">12.42</div>
<div class="clip" style="top:415px"><div class="t r" style="right:0px;top:0;color:#00e600">24088</div></div>
<div class="t r" style="right:152px;top:415px;color:#ff3c3c">28055</div>
<div class="t r" style="right:85px;top:415px;color:#ff3c3c">0.86</div>
<div class="t r" style="right:19px;top:415px;color:#dcdc00">237</div>
<div class="t c" style="left:-18px;top:438px;color:#e8e8e8">17</div>
<div class="t" style="left:52px;top:438px;color:#e8e8e8">300267</div>
<div class="n" style="left:117px;top:438px;color:#e8e8e8">尔康制药</div>
<div class="mk" style="left:211px;top:438px">R</div>
<div class="t r" style="right:1644px;top:438px;color:#e8e8e8">0.00</div>
<div class="t r" style="right:1568px;top:438px;color:#e8e8e8">3.60</div>
<div class="t r" style="right:1501.5px;top:438px;color:#e8e8e8">0.00</div>
<div class="t r" style="right:1425px;top:438px;color:#e8e8e8">3.60</div>
<div class="t r" style="right:1349.5px;top:438px;color:#ff3c3c">3.61</div>
<div class="t r" style="right:1282px;top:438px;color:#dcdc00">42443</div>
<div class="t r" style="right:625px;top:438px;color:#00d8ff">1529万</div>
<div class="t r" style="right:567px;top:438px;color:#00e600">0.97</div>
<div class="n" style="left:1364px;top:438px;color:#e8e8e8">化学制药</div>
<div class="n" style="left:1462px;top:438px;color:#e8e8e8">湖南</div>
<div class="t r" style="right:335px;top:438px;color:#e8e8e8">0.83</div>
<div class="t r" style="right:259.5px;top:438px;color:#ff3c3c">3.60</div>
<div class="clip" style="top:438px"><div class="t r" style="right:0px;top:0;color:#00e600">21816</div></div>
<div class="t r" style="right:152px;top:438px;color:#ff3c3c">20627</div>
<div class="t r" style="right:85px;top:438px;color:#00e600">1.06</div>
<div class="t r" style="right:19px;top:438px;color:#dcdc00">6467</div>
<div class="t c" style="left:-18px;top:461px;color:#e8e8e8">18</div>
<div class="t" style="left:52px;top:461px;color:#e8e8e8">300713</div>
<div class="n" style="left:117px;top:461px;color:#e8e8e8">英可瑞</div>
<div class="t r" style="right:1644px;top:461px;color:#00e600">-1.05</div>
<div class="t r" style="right:1568px;top:461px;color:#00e600">16.90</div>
<div class="t r" style="right:1501.5px;top:461px;color:#00e600">-0.18</div>
<div class="t r" style="right:1425px;top:461px;color:#00e600">16.91</div>
<div class="t r" style="right:1349.5px;top:461px;color:#00e600">16.92</div>
<div class="t r" style="right:1282px;top:461px;color:#dcdc00">18063</div>
<div class="t r" style="right:625px;top:461px;color:#00d8ff">3054万</div>
<div class="t r" style="right:567px;top:461px;color:#ff3c3c">1.18</div>
<div class="n" style="left:1364px;top:461px;color:#e8e8e8">电气设备</div>
<div class="n" style="left:1462px;top:461px;color:#e8e8e8">深圳</div>
<div class="t r" style="right:335px;top:461px;color:#e8e8e8">2.17</div>
<div class="t r" style="right:259.5px;top:461px;color:#00e600">16.91</div>
<div class="clip" style="top:461px"><div class="t r" style="right:0px;top:0;color:#00e600">10704</div></div>
<div class="t r" style="right:152px;top:461px;color:#ff3c3c">7359</div>
<div class="t r" style="right:85px;top:461px;color:#00e600">1.45</div>
<div class="t r" style="right:19px;top:461px;color:#dcdc00">2</div>
<div class="t c" style="left:-18px;top:484px;color:#e8e8e8">19</div>
<div class="t" style="left:52px;top:484px;color:#e8e8e8">300779</div>
<div class="n" style="left:117px;top:484px;color:#e8e8e8">惠城环保</div>
<div class="t r" style="right:1644px;top:484px;color:#00e600">-1.11</div>
<div class="t r" style="right:1568px;top:484px;color:#00e600">41.14</div>
<div class="t r" style="right:1501.5px;top:484px;color:#00e600">-0.46</div>
<div class="t r" style="right:1425px;top:484px;color:#00e600">41.14</div>
<div class="t r" style="right:1349.5px;top:484px;color:#00e600">41.17</div>
<div class="t r" style="right:1282px;top:484px;color:#dcdc00">4105</div>
<div class="t r" style="right:625px;top:484px;color:#00d8ff">1692万</div>
<div class="t r" style="right:567px;top:484px;color:#00e600">0.78</div>
<div class="n" style="left:1364px;top:484px;color:#e8e8e8">环境保护</div>
<div class="n" style="left:1462px;top:484px;color:#e8e8e8">山东</div>
<div class="t r" style="right:335px;top:484px;color:#e8e8e8">2.07</div>
<div class="t r" style="right:259.5px;top:484px;color:#00e600">41.22</div>
<div class="clip" style="top:484px"><div class="t r" style="right:0px;top:0;color:#00e600">2514</div></div>
<div class="t r" style="right:152px;top:484px;color:#ff3c3c">1591</div>
<div class="t r" style="right:85px;top:484px;color:#00e600">1.58</div>
<div class="t r" style="right:19px;top:484px;color:#dcdc00">3</div>
<div class="t c" style="left:-18px;top:507px;color:#e8e8e8">20</div>
<div class="t" style="left:52px;top:507px;color:#e8e8e8">300984</div>
<div class="n" style="left:117px;top:507px;color:#e8e8e8">金沃股份</div>
<div class="mk" style="left:211px;top:507px">Z</div>
<div class="t r" style="right:1644px;top:507px;color:#00e600">-1.00</div>
<div class="t r" style="right:1568px;top:507px;color:#00e600">23.68</div>
<div class="t r" style="right:1501.5px;top:507px;color:#00e600">-0.24</div>
<div class="t r" style="right:1425px;top:507px;color:#00e600">23.68</div>
<div class="t r" style="right:1349.5px;top:507px;color:#00e600">23.69</div>
<div class="t r" style="right:1282px;top:507px;color:#dcdc00">7082</div>
<div class="t r" style="right:625px;top:507px;color:#00d8ff">1670万</div>
<div class="t r" style="right:567px;top:507px;color:#e600e6">3.46</div>
<div class="n" style="left:1364px;top:507px;color:#e8e8e8">机械基件</div>
<div class="n" style="left:1462px;top:507px;color:#e8e8e8">浙江</div>
<div class="t r" style="right:335px;top:507px;color:#e8e8e8">2.05</div>
<div class="t r" style="right:259.5px;top:507px;color:#00e600">23.57</div>
<div class="clip" style="top:507px"><div class="t r" style="right:0px;top:0;color:#00e600">3405</div></div>
<div class="t r" style="right:152px;top:507px;color:#ff3c3c">3677</div>
<div class="t r" style="right:85px;top:507px;color:#ff3c3c">0.93</div>
<div class="t r" style="right:19px;top:507px;color:#dcdc00">2</div>
<div class="t c" style="left:-18px;top:530px;color:#e8e8e8">21</div>
<div class="t" style="left:52px;top:530px;color:#e8e8e8">300997</div>
<div class="n" style="left:117px;top:530px;color:#e8e8e8">欢乐家</div>
<div class="mk" style="left:211px;top:530px">Z</div>
<div class="t r" style="right:1644px;top:530px;color:#00e600">-0.54</div>
<div class="t r" style="right:1568px;top:530px;color:#00e600">12.91</div>
<div class="t r" style="right:1501.5px;top:530px;color:#00e600">-0.07</div>
<div class="t r" style="right:1425px;top:530px;color:#00e600">12.90</div>
<div class="t r" style="right:1349.5px;top:530px;color:#00e600">12.91</div>
<div class="t r" style="right:1282px;top:530px;color:#dcdc00">4419</div>
<div class="t r" style="right:625px;top:530px;color:#00d8ff">572.0万</div>
<div class="t r" style="right:567px;top:530px;color:#00e600">0.78</div>
<div class="n" style="left:1364px;top:530px;color:#e8e8e8">软饮料</div>
<div class="n" style="left:1462px;top:530px;color:#e8e8e8">广东</div>
<div class="t r" style="right:335px;top:530px;color:#e8e8e8">1.16</div>
<div class="t r" style="right:259.5px;top:530px;color:#00e600">12.94</div>
<div class="clip" style="top:530px"><div class="t r" style="right:0px;top:0;color:#00e600">2090</div></div>
<div class="t r" style="right:152px;top:530px;color:#ff3c3c">2329</div>
<div class="t r" style="right:85px;top:530px;color:#ff3c3c">0.90</div>
<div class="t r" style="right:19px;top:530px;color:#dcdc00">1</div>
<div class="t c" style="left:-18px;top:553px;color:#e8e8e8">22</div>
<div class="t" style="left:52px;top:553px;color:#e8e8e8">301161</div>
<div class="n" style="left:117px;top:553px;color:#e8e8e8">唯万密封</div>
<div class="mk" style="left:211px;top:553px">Z</div>
<div class="t r" style="right:1644px;top:553px;color:#00e600">-2.48</div>
<div class="t r" style="right:1568px;top:553px;color:#00e600">27.95</div>
<div class="t r" style="right:1501.5px;top:553px;color:#00e600">-0.71</div>
<div class="t r" style="right:1425px;top:553px;color:#00e600">27.93</div>
<div class="t r" style="right:1349.5px;top:553px;color:#00e600">27.95</div>
<div class="t r" style="right:1282px;top:553px;color:#dcdc00">9043</div>
<div class="t r" style="right:625px;top:553px;color:#00d8ff">2540万</div>
<div class="t r" style="right:567px;top:553px;color:#00e600">0.81</div>
<div class="n" style="left:1364px;top:553px;color:#e8e8e8">橡胶</div>
<div class="n" style="left:1462px;top:553px;color:#e8e8e8">上海</div>
<div class="t r" style="right:335px;top:553px;color:#e8e8e8">3.04</div>
<div class="t r" style="right:259.5px;top:553px;color:#00e600">28.09</div>
<div class="clip" style="top:553px"><div class="t r" style="right:0px;top:0;color:#00e600">4909</div></div>
<div class="t r" style="right:152px;top:553px;color:#ff3c3c">4134</div>
<div class="t r" style="right:85px;top:553px;color:#00e600">1.19</div>
<div class="t r" style="right:19px;top:553px;color:#dcdc00">88</div>
<div id="dlg">
 <div class="dt"><span class="dtt">条件选股</span><div class="dmin"></div>
  <svg style="position:absolute;left:531px;top:5px" width="10" height="10" viewBox="0 0 10 10"><path d="M0.5 0.5L9.5 9.5M9.5 0.5L0.5 9.5" stroke="#f4dcdc" stroke-width="1.1"/></svg></div>
 <div class="dl" style="left:6px;top:34px">条件选股公式</div>
 <div class="cb" style="left:85px;top:30px;width:284px;height:25px"><div class="dl" style="left:3px;top:4px">黄金拐点介入&nbsp;&nbsp;-</div><div class="cbd" style="left:264px"></div><div class="cba" style="left:270px;top:10px"></div></div>
 <div class="btn" style="left:373px;top:30px;width:42px">查找</div>
 <div class="btn" style="left:420px;top:30px;width:57px">用法注释</div>
 <div class="btn" style="left:481px;top:30px;width:57px">查看公式</div>
 <div class="dl" style="left:303px;top:58px">选股条件列表</div>
 <div class="lb" style="left:301px;top:75px;width:236px;height:173px"><div class="sel">黄金拐点介入<span style="margin-left:10px">日线</span></div></div>
 <div class="grp" style="left:4px;top:67px;width:210px;height:201px"></div>
 <div class="dl glb" style="left:10px;top:62px">计算参数</div>
 <div class="dl" style="left:11px;top:93px">无参数需要设置</div>
 <div class="btn" style="left:223px;top:73px;width:66px">加入条件</div>
 <div class="btn" style="left:223px;top:111px;width:66px">删除条件</div>
 <div class="btn" style="left:223px;top:184px;width:66px">引入方案</div>
 <div class="btn" style="left:223px;top:222px;width:66px">保存方案</div>
 <div class="dl" style="left:13px;top:242px">选股周期:</div>
 <div class="cb" style="left:73px;top:238px;width:128px;height:25px"><div class="dl" style="left:3px;top:4px">日线</div><div class="cbd" style="left:109px"></div><div class="cba" style="left:114px;top:10px"></div></div>
 <div class="grp" style="left:4px;top:281px;width:210px;height:142px"></div>
 <div class="dl glb" style="left:10px;top:275px">选股范围</div>
 <div class="dl" style="left:10px;top:295px">上证<span class="la">A</span>股 深证<span class="la">A</span>股</div>
 <div class="btn" style="left:139px;top:289px;width:63px">改变范围</div>
 <div class="ck" style="left:223px;top:298px"></div><div class="dl" style="left:241px;top:296px">使用涨跌不定周期</div>
 <div class="pb" style="left:343px;top:298px;width:193px;height:14px"></div>
 <div class="rd on" style="left:302px;top:256px"></div><div class="dl gr" style="left:320px;top:255px">全部条件相与</div>
 <div class="rd" style="left:445px;top:256px"></div><div class="dl gr" style="left:463px;top:255px">全部条件相或</div>
 <div class="dl" style="left:475px;top:275px;color:#e00000">选股完毕.</div>
 <div class="dl" style="left:343px;top:321px">品种数</div><div class="pb" style="left:381px;top:321px;width:41px;height:15px"></div><div class="dl" style="left:382px;top:321px;font-size:13px">4943</div>
 <div class="dl" style="left:427px;top:321px">选中数</div><div class="pb" style="left:466px;top:321px;width:70px;height:15px"></div><div class="dl" style="left:467px;top:321px;font-size:13px">22/0.4%</div>
 <div class="ck" style="left:223px;top:350px"><svg width="11" height="11" viewBox="0 0 11 11"><path d="M2 5.5L4.3 8L9 2.5" fill="none" stroke="#1a9a1a" stroke-width="1.6"/></svg></div><div class="dl" style="left:241px;top:348px">前复权数据</div>
 <div class="ck" style="left:310px;top:350px"><svg width="11" height="11" viewBox="0 0 11 11"><path d="M2 5.5L4.3 8L9 2.5" fill="none" stroke="#1a9a1a" stroke-width="1.6"/></svg></div><div class="dl" style="left:328px;top:348px">剔除当前未交易的品种</div>
 <div class="ck" style="left:457px;top:350px"><svg width="11" height="11" viewBox="0 0 11 11"><path d="M2 5.5L4.3 8L9 2.5" fill="none" stroke="#1a9a1a" stroke-width="1.6"/></svg></div><div class="dl" style="left:475px;top:348px">剔除ST品种</div>
 <div class="ck" style="left:223px;top:378px"></div><div class="dl" style="left:241px;top:377px">时间段内满足条件</div>
 <div class="btn" style="left:385px;top:372px;width:72px">选股入板块</div>
 <div class="btn" style="left:471px;top:372px;width:66px">执行选股</div>
 <div class="btn" style="left:471px;top:399px;width:66px">关闭</div>
</div>

<div id="wctl">
<svg style="position:absolute;left:1813px;top:6px" width="104" height="16" viewBox="0 0 104 16">
 <g stroke="#a6b4c8" fill="none" stroke-width="1.8">
  <path d="M3 7H17"/><path d="M8.5 1.8L2.8 7L8.5 12.2"/>
  <path d="M31 7H43" stroke-width="2"/>
  <rect x="62.5" y="1.5" width="9.5" height="7.5" rx="1.5" stroke-width="1.6"/>
  <rect x="58.5" y="5.5" width="9.5" height="7.5" rx="1.5" fill="#1b1e26" stroke-width="1.6"/>
  <path d="M87 1L99.5 13.5M99.5 1L87 13.5" stroke-width="1.4"/>
 </g>
</svg>
</div>
<div id="btabs">
 <div class="bt" style="left:0;width:47px;color:#f0f0f0">分类<i class="tu w"></i></div>
 <div class="bt" style="left:48px;width:35px;color:#ff3232">自选</div>
 <div class="bt" style="left:84px;width:47px;color:#f0f0f0">板块<i class="tu w"></i></div>
 <div class="bt" style="left:132px;width:47px;color:#f0f0f0">自定<i class="tu w"></i></div>
 <div class="bt" style="left:180px;width:47px">港股<i class="tu"></i></div>
 <div class="bt" style="left:228px;width:47px">期权<i class="tu"></i></div>
 <div class="bt" style="left:276px;width:71px">期货现货<i class="tu"></i></div>
 <div class="bt" style="left:348px;width:71px">基金理财<i class="tu"></i></div>
 <div class="bt" style="left:420px;width:71px">美股环球<i class="tu"></i></div>
 <div class="bt" style="left:492px;width:71px">其它品种<i class="tu"></i></div>
 <div class="sbtn" style="left:565px"><i class="tl"></i></div>
 <div class="sthumb"></div>
 <div class="sbtn" style="left:1906px"><i class="tr"></i></div>
</div>
<div id="gap"></div>
<div id="status">
 <svg style="position:absolute;left:3px;top:6.5px" width="16" height="16" viewBox="0 0 16 16"><defs><linearGradient id="cg" x1="0" y1="0" x2="0" y2="1"><stop offset="0" stop-color="#9aa0aa"/><stop offset="1" stop-color="#70767f"/></linearGradient></defs><circle cx="8" cy="8" r="7.5" fill="url(#cg)"/><path d="M4.5 4.5L8 7.5L11.5 4.5M4.5 8L8 11L11.5 8" fill="none" stroke="#23262c" stroke-width="1.1"/></svg>
 <div class="s" style="left:26px">上证</div>
 <div class="s g" style="left:54px">3279.79</div>
 <div class="s g" style="left:111px">-7.69</div>
 <div class="s g" style="left:152px">-0.23%</div>
 <div class="s" style="left:196px">1027亿</div>
 <div class="s" style="left:245px">深证</div>
 <div class="s g" style="left:273px">11852.1</div>
 <div class="s g" style="left:326px">-32.24</div>
 <div class="s g" style="left:371px">-0.27%</div>
 <div class="s" style="left:415px">1507亿</div>
 <div class="s" style="left:465px">沪深</div>
 <div class="s g" style="left:492px">4083.86</div>
 <div class="s g" style="left:546px">-19.79</div>
 <div class="s g" style="left:591px">-0.48%</div>
 <div class="s" style="left:633px">608.1亿</div>
 <div class="s" style="left:685px">创业</div>
 <div class="s g" style="left:713px">2446.39</div>
 <div class="s g" style="left:766px">-11.09</div>
 <div class="s g" style="left:811px">-0.45%</div>
 <div class="s" style="left:855px">550.0亿</div>
 <div class="s" style="left:905px">科创</div>
 <div class="s rr" style="left:937px">994.53</div>
 <div class="s rr" style="left:994px">2.07</div>
 <div class="s rr" style="left:1031px">0.21%</div>
 <div class="s" style="left:1075px">166.1亿</div>
 <svg style="position:absolute;left:1127px;top:8px" width="104" height="16" viewBox="0 0 104 16">
  <g>
   <rect x="0.5" y="0.5" width="50" height="6.5" fill="#111" stroke="#f0f0f0"/>
   <rect x="11" y="1" width="14" height="6" fill="#ff0000"/>
   <rect x="25" y="1" width="10" height="6" fill="#008a00"/>
   <rect x="37" y="0.5" width="1" height="7" fill="#f0f0f0"/>
   <rect x="52.5" y="0.5" width="50" height="6.5" fill="#111" stroke="#f0f0f0"/>
   <rect x="63" y="1" width="14" height="6" fill="#ff0000"/>
   <rect x="77" y="1" width="10" height="6" fill="#008a00"/>
   <rect x="89" y="0.5" width="1" height="7" fill="#f0f0f0"/>
  </g>
  <g fill="#ff0000">
   <rect x="4" y="9" width="5" height="2"/><rect x="4" y="12.5" width="5" height="2"/>
   <path d="M14.5 8.5L11.5 11.5H13.5V14.5H15.5V11.5H17.5Z"/>
   <rect x="20" y="9" width="5" height="2"/><rect x="20" y="12.5" width="5" height="2"/>
   <path d="M30.5 8.5L27.5 11.5H29.5V14.5H31.5V11.5H33.5Z"/>
   <rect x="36" y="9" width="5" height="2"/><rect x="36" y="12.5" width="5" height="2"/>
   <rect x="43" y="9" width="5" height="2"/><rect x="43" y="12.5" width="5" height="2"/>
   <rect x="56" y="9" width="5" height="2"/><rect x="56" y="12.5" width="5" height="2"/>
   <path d="M66.5 8.5L63.5 11.5H65.5V14.5H67.5V11.5H69.5Z"/>
   <rect x="72" y="9" width="5" height="2"/><rect x="72" y="12.5" width="5" height="2"/>
   <path d="M82.5 8.5L79.5 11.5H81.5V14.5H83.5V11.5H85.5Z"/>
   <rect x="88" y="9" width="5" height="2"/><rect x="88" y="12.5" width="5" height="2"/>
   <rect x="95" y="9" width="5" height="2"/><rect x="95" y="12.5" width="5" height="2"/>
  </g>
 </svg>
 <svg style="position:absolute;left:1239px;top:8px" width="15" height="12" viewBox="0 0 15 12"><defs><linearGradient id="ibg" x1="0" y1="0" x2="0" y2="1"><stop offset="0" stop-color="#9ca2ab"/><stop offset="1" stop-color="#6c717a"/></linearGradient></defs><rect x="0" y="0" width="15" height="11.5" rx="2" fill="url(#ibg)"/><path d="M5 3C3.6 4.5 3.6 7 5 8.5M10 3C11.4 4.5 11.4 7 10 8.5" fill="none" stroke="#33363c" stroke-width="1"/><circle cx="7.5" cy="5.75" r="1.1" fill="#33363c"/></svg>
 <div class="ib" style="left:1259px"><span style="color:#f4f4f4;font-size:12px">1</span></div>
 <div class="s" style="left:1277px;color:#c8ccd4;font-size:12px">北京联通主站Z2</div>
 <div class="s" style="left:1754px;color:#e0e0e0;top:4px">7x24</div>
 <svg style="position:absolute;left:1797px;top:1014px;top:1px" width="110" height="22" viewBox="0 0 110 22">
  <g fill="#8f959e">
   <rect x="1" y="6" width="15" height="11.5" rx="2"/>
   <rect x="31" y="6" width="15" height="10" rx="2"/><rect x="37.5" y="16" width="2" height="2"/><rect x="35" y="18" width="7" height="1.2"/>
   <path d="M65 4.8 C59 9 61 19 75.5 15.8 Z"/><path d="M63.5 15.5L61 20H68L66.5 16Z"/><circle cx="72.5" cy="8" r="1.5"/><path d="M69 11.5L72.5 8" stroke="#8f959e" stroke-width="1"/>
   <circle cx="98.5" cy="12.5" r="7.5"/>
  </g>
  <g fill="#1f2228">
   <rect x="3.5" y="8.5" width="1.5" height="1.5"/><rect x="6" y="8.5" width="1.5" height="1.5"/><rect x="8.5" y="8.5" width="1.5" height="1.5"/><rect x="11" y="8.5" width="1.5" height="1.5"/><rect x="13" y="8.5" width="1.5" height="1.5"/>
   <rect x="3.5" y="11" width="1.5" height="1.5"/><rect x="6" y="11" width="1.5" height="1.5"/><rect x="8.5" y="11" width="1.5" height="1.5"/><rect x="11" y="11" width="1.5" height="1.5"/><rect x="13" y="11" width="1.5" height="1.5"/>
   <rect x="4" y="14" width="9.5" height="1.4"/>
  </g>
  <path d="M33 11.5H36L37.5 9L39.5 14L41 11.5H44" fill="none" stroke="#1f2228" stroke-width="1"/>
  <path d="M100 7.5L96 13H99L97.5 17.5L101.5 12H98.5Z" fill="#1f2228"/>
 </svg>
</div>
<div id="olive"></div><div style="position:absolute;left:218px;top:1040px;width:48px;height:2px;background:#5c5d55"></div>

<div class="wm" style="left:2px;top:856px">www.cfchi.com</div>
<div class="wm" style="left:287px;top:856px">www.cfchi.com</div>
<div class="wm" style="left:572px;top:856px">www.cfchi.com</div>
<div class="wm" style="left:857px;top:856px">www.cfchi.com</div>
<div class="wm" style="left:1142px;top:856px">www.cfchi.com</div>
<div class="wm" style="left:1427px;top:856px">www.cfchi.com</div>
<div class="wm" style="left:1712px;top:856px">www.cfchi.com</div>
<div class="wm" style="left:2px;top:637px">www.cfchi.com</div>
<div class="wm" style="left:287px;top:637px">www.cfchi.com</div>
<div class="wm" style="left:572px;top:637px">www.cfchi.com</div>
<div class="wm" style="left:857px;top:637px">www.cfchi.com</div>
<div class="wm" style="left:1142px;top:637px">www.cfchi.com</div>
<div class="wm" style="left:1427px;top:637px">www.cfchi.com</div>
<div class="wm" style="left:1712px;top:637px">www.cfchi.com</div>
<div class="wm" style="left:2px;top:418px">www.cfchi.com</div>
<div class="wm" style="left:287px;top:418px">www.cfchi.com</div>
<div class="wm" style="left:572px;top:418px">www.cfchi.com</div>
<div class="wm" style="left:857px;top:418px">www.cfchi.com</div>
<div class="wm" style="left:1142px;top:418px">www.cfchi.com</div>
<div class="wm" style="left:1427px;top:418px">www.cfchi.com</div>
<div class="wm" style="left:1712px;top:418px">www.cfchi.com</div>
<div class="wm" style="left:2px;top:199px">www.cfchi.com</div>
<div class="wm" style="left:287px;top:199px">www.cfchi.com</div>
<div class="wm" style="left:572px;top:199px">www.cfchi.com</div>
<div class="wm" style="left:857px;top:199px">www.cfchi.com</div>
<div class="wm" style="left:1142px;top:199px">www.cfchi.com</div>
<div class="wm" style="left:1427px;top:199px">www.cfchi.com</div>
<div class="wm" style="left:1712px;top:199px">www.cfchi.com</div>
<div class="wm" style="left:2px;top:-20px">www.cfchi.com</div>
<div class="wm" style="left:287px;top:-20px">www.cfchi.com</div>
<div class="wm" style="left:572px;top:-20px">www.cfchi.com</div>
<div class="wm" style="left:857px;top:-20px">www.cfchi.com</div>
<div class="wm" style="left:1142px;top:-20px">www.cfchi.com</div>
<div class="wm" style="left:1427px;top:-20px">www.cfchi.com</div>
<div class="wm" style="left:1712px;top:-20px">www.cfchi.com</div>
</body></html>
